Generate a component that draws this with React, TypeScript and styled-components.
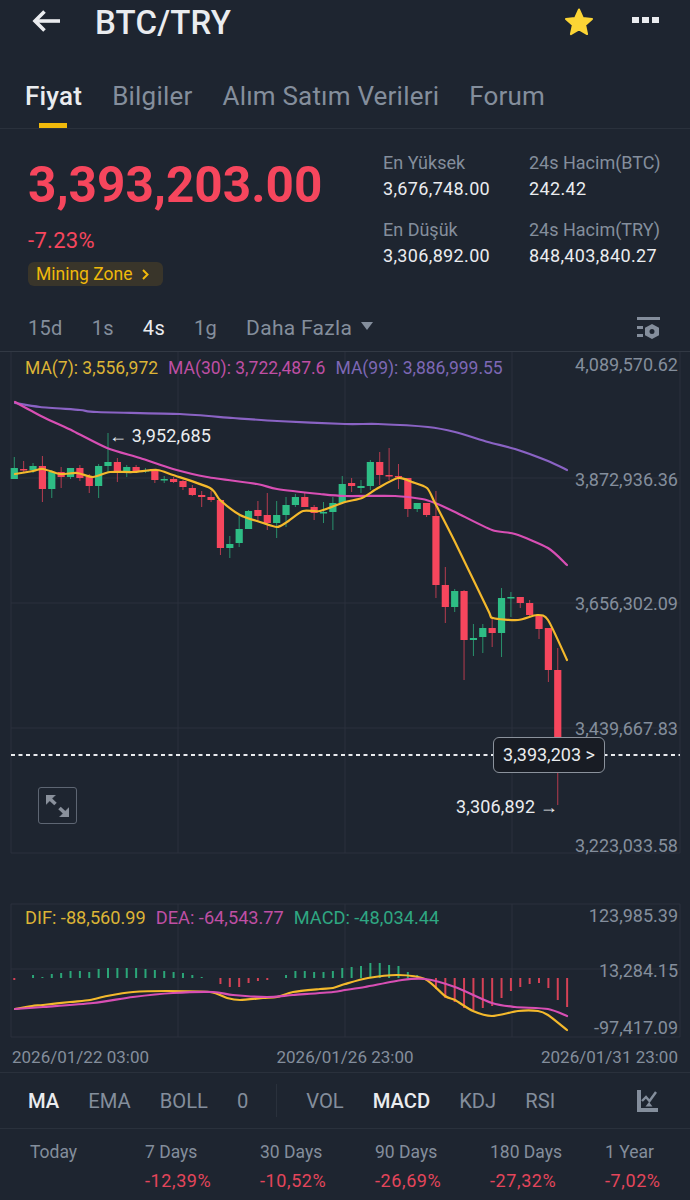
import React from 'react';
import styled, { createGlobalStyle } from 'styled-components';

const GlobalStyle = createGlobalStyle`
  html, body {
    margin: 0;
    padding: 0;
    background: #1e2530;
  }
  * {
    box-sizing: border-box;
  }
`;

const RED = '#f6465d';
const GREEN = '#2ebd85';
const YELLOW = '#f0b90b';
const PINK = '#d84fb4';
const PURPLE = '#8a63c4';
const GRID = '#2a313c';
const MUTED = '#848e9c';

// [top of body, bottom of body, top of wick, bottom of wick, up?]
type Candle = [number, number, number, number, number];

const candles: Candle[] = [
  [468, 479, 457, 479, 1], [469, 470, 461, 472, 0], [466, 470, 463, 473, 1], [466, 489, 456, 502, 0],
  [472, 489, 470, 498, 1], [472, 477, 467, 488, 0], [468, 477, 468, 479, 1], [468, 478, 465, 481, 0],
  [477, 486, 474, 493, 0], [466, 486, 464, 498, 1], [462, 466, 433, 472, 1], [462, 472, 458, 482, 0],
  [467, 472, 465, 477, 1], [467, 471, 465, 472, 0], [470, 471, 468, 473, 1], [471, 480, 470, 483, 0],
  [479, 480, 476, 483, 1], [479, 482, 477, 483, 0], [481, 487, 480, 490, 0], [488, 495, 485, 496, 0],
  [495, 497, 491, 507, 0], [497, 500, 491, 502, 0], [500, 548, 500, 555, 0], [544, 548, 536, 558, 1],
  [529, 543, 515, 547, 1], [511, 529, 510, 529, 1], [510, 516, 501, 522, 0], [515, 523, 493, 530, 0],
  [515, 523, 501, 538, 1], [505, 515, 497, 527, 1], [497, 505, 494, 507, 1], [497, 507, 493, 507, 0],
  [507, 513, 505, 520, 0], [512, 513, 502, 523, 1], [503, 512, 497, 530, 1], [484, 503, 476, 503, 1],
  [483, 486, 478, 492, 0], [486, 488, 480, 493, 1], [462, 486, 460, 490, 1], [462, 475, 452, 485, 0],
  [475, 476, 448, 480, 0], [476, 477, 464, 489, 0], [478, 509, 478, 517, 0], [503, 509, 503, 512, 1],
  [503, 515, 503, 517, 0], [516, 585, 491, 598, 0], [585, 607, 567, 623, 0], [591, 607, 589, 612, 1],
  [591, 640, 590, 680, 0], [638, 640, 624, 656, 1], [628, 637, 624, 653, 1], [628, 633, 618, 647, 0],
  [598, 633, 588, 657, 1], [597, 598, 592, 617, 1], [597, 603, 597, 608, 0], [603, 615, 600, 616, 0],
  [615, 629, 615, 639, 0], [628, 670, 628, 682, 0], [670, 755, 648, 805, 0],
];

// end of each MACD histogram bar, the bars start at the zero line
const histogram = [
  980, 978, 975, 977, 974, 973, 971, 971, 972, 969, 968, 968, 968, 968, 969, 970, 971, 972, 973, 975, 977, 978,
  984, 987, 987, 983, 981, 980, 978, 975, 971, 971, 972, 972, 971, 968, 967, 966, 963, 963, 965, 966, 972, 975, 978,
  989, 998, 1002, 1008, 1010, 1008, 1006, 998, 991, 987, 984, 983, 988, 1000, 1007,
];

const candleX = (i: number) => 14.3 + i * 9.37;

const ma99 = '15,403 40,407 80,410 97,412 180,414 233,418 277,421 345,424 378,424 428,427 455,432 488,442 515,449 548,461 567,470';
const ma30 = '15,402 43,417 73,431 107,448 140,458 173,469 207,477 257,484 277,489 320,494 345,496 395,496 422,499 435,503 455,512 492,530 515,534 548,548 567,565';
const ma7 = '15,474 33,471 43,469 60,474 77,473 93,477 110,472 133,472 157,470 173,475 210,488 220,500 240,515 260,522 277,527 287,522 303,511 320,511 345,502 362,498 378,488 398,478 412,482 427,488 435,503 455,542 488,610 493,618 518,620 537,615 548,620 567,660';
const dif = '15,1009 32,1006 43,1005 70,1002 90,1000 107,996 133,992 167,991 210,992 227,998 240,1000 263,998 277,997 293,992 320,989 333,988 345,984 368,978 398,975 425,979 445,996 455,1000 473,1011 492,1016 518,1011 538,1011 548,1015 567,1030';
const dea = '15,1009 43,1007 93,1003 133,997 173,993 213,992 233,995 267,997 293,995 333,992 345,990 365,987 402,980 425,979 455,987 492,1003 515,1007 548,1009 567,1016';

// catmull-rom through the points so the averages don't look like polylines
const smooth = (points: string) => {
  const p = points.split(' ').map((s) => s.split(',').map(Number));
  let d = `M${p[0][0]} ${p[0][1]}`;
  for (let i = 0; i < p.length - 1; i++) {
    const a = p[Math.max(i - 1, 0)];
    const b = p[i];
    const c = p[i + 1];
    const e = p[Math.min(i + 2, p.length - 1)];
    const c1 = [b[0] + (c[0] - a[0]) / 8, b[1] + (c[1] - a[1]) / 8];
    const c2 = [c[0] - (e[0] - b[0]) / 8, c[1] - (e[1] - b[1]) / 8];
    d += `C${c1[0]} ${c1[1]} ${c2[0]} ${c2[1]} ${c[0]} ${c[1]}`;
  }
  return d;
};

const Page = styled.div`
  width: 690px;
  height: 1200px;
  overflow: hidden;
  background: #1e2530;
  color: #eaecef;
  font-family: Roboto, 'Liberation Sans', sans-serif;
`;

const Header = styled.header`
  display: flex;
  align-items: center;
  height: 44px;
  padding: 0 31px 0 32px;
`;

const BackButton = styled.div`
  display: flex;
  margin-bottom: 3px;
`;

const PairTitle = styled.h1`
  margin: 0 0 0 35px;
  flex: 1;
  font-size: 33px;
  font-weight: 500;
  letter-spacing: 0.2px;
`;

const HeaderDots = styled.div`
  display: flex;
  gap: 3px;
  margin-left: 38px;
  margin-bottom: 5px;
`;

const Dot = styled.span`
  width: 7px;
  height: 6px;
  background: #eaecef;
`;

const Tabs = styled.nav`
  display: flex;
  gap: 30px;
  height: 85px;
  padding: 36px 0 0 25px;
  border-bottom: 1px solid ${GRID};
`;

const Tab = styled.div<{ $active?: boolean }>`
  position: relative;
  height: 48px;
  font-size: 26px;
  line-height: 32px;
  letter-spacing: 0.2px;
  font-weight: ${(p) => (p.$active ? 500 : 400)};
  color: ${(p) => (p.$active ? '#eaecef' : MUTED)};

  &::after {
    content: '';
    display: ${(p) => (p.$active ? 'block' : 'none')};
    position: absolute;
    left: 14px;
    bottom: 0;
    width: 28px;
    height: 5px;
    background: ${YELLOW};
  }
`;

const Summary = styled.section`
  display: flex;
  height: 176px;
`;

const PriceBlock = styled.div`
  width: 383px;
  padding: 27px 0 0 28px;
`;

const BigPrice = styled.div`
  font-size: 49.5px;
  line-height: 58px;
  font-weight: 700;
  color: ${RED};
`;

const Change = styled.div`
  margin-top: 15px;
  font-size: 22px;
  line-height: 24px;
  letter-spacing: 0.3px;
  color: ${RED};
`;

const MiningZone = styled.div`
  display: inline-flex;
  align-items: center;
  gap: 9px;
  height: 24px;
  margin-top: 9px;
  padding: 0 14px 0 8px;
  border-radius: 6px;
  background: #39352a;
  color: ${YELLOW};
  font-size: 17.5px;
`;

const Stats = styled.div`
  display: grid;
  grid-template-columns: 146px 146px;
  grid-auto-rows: 67px;
  padding-top: 24px;
`;

const StatLabel = styled.div`
  font-size: 18px;
  line-height: 20px;
  color: ${MUTED};
`;

const StatValue = styled.div`
  margin-top: 6px;
  font-size: 18px;
  line-height: 20px;
  letter-spacing: 0.35px;
  color: #eaecef;
`;

const Intervals = styled.div`
  display: flex;
  align-items: center;
  gap: 29px;
  height: 47px;
  padding: 0 30px 0 28px;
  border-bottom: 1px solid #323944;
`;

const Interval = styled.div<{ $active?: boolean }>`
  font-size: 20px;
  letter-spacing: 0.3px;
  color: ${(p) => (p.$active ? '#eaecef' : MUTED)};
`;

const More = styled(Interval)`
  display: flex;
  align-items: center;
  gap: 9px;
  flex: 1;
  font-size: 21px;
`;

const Caret = styled.span`
  width: 0;
  height: 0;
  margin-bottom: 4px;
  border-left: 6px solid transparent;
  border-right: 6px solid transparent;
  border-top: 8px solid ${MUTED};
`;

const ChartPanel = styled.div<{ $height: number }>`
  position: relative;
  height: ${(p) => p.$height}px;

  svg.plot {
    display: block;
  }
`;

const Legend = styled.div<{ $top: number; $size: number }>`
  position: absolute;
  left: 25px;
  top: ${(p) => p.$top}px;
  display: flex;
  gap: 10px;
  font-size: ${(p) => p.$size}px;
  line-height: 20px;
  white-space: nowrap;
`;

const LegendItem = styled.span<{ $color: string }>`
  color: ${(p) => p.$color};
`;

const AxisLabel = styled.div<{ $top: number }>`
  position: absolute;
  right: 12px;
  top: ${(p) => p.$top}px;
  font-size: 18px;
  line-height: 20px;
  color: ${MUTED};
`;

const PriceMark = styled.div<{ $top: number; $left: number }>`
  position: absolute;
  left: ${(p) => p.$left}px;
  top: ${(p) => p.$top}px;
  font-size: 18px;
  line-height: 20px;
  letter-spacing: 0.15px;
  color: #eaecef;
  white-space: nowrap;
`;

const LastPrice = styled.div`
  position: absolute;
  left: 493px;
  top: 385px;
  width: 112px;
  height: 36px;
  border: 1px solid #8b929c;
  border-radius: 6px;
  background: #181c24;
  color: #eaecef;
  font-size: 18px;
  line-height: 34px;
  text-align: center;
`;

const ExpandButton = styled.div`
  position: absolute;
  left: 38px;
  top: 435px;
  width: 39px;
  height: 37px;
  display: flex;
  align-items: center;
  justify-content: center;
  border: 1px solid #5e6673;
  border-radius: 3px;
`;

const DateRow = styled.div`
  display: flex;
  justify-content: space-between;
  align-items: center;
  height: 31px;
  padding: 0 12px;
  border-bottom: 1px solid ${GRID};
  font-size: 17px;
  color: ${MUTED};
`;

const Indicators = styled.div`
  display: flex;
  align-items: center;
  height: 56px;
  padding: 0 32px 0 28px;
  border-bottom: 1px solid ${GRID};
`;

const IndicatorGroup = styled.div`
  display: flex;
  align-items: center;
  gap: 29px;
`;

const Indicator = styled.div<{ $active?: boolean }>`
  font-size: 20.2px;
  font-weight: ${(p) => (p.$active ? 500 : 400)};
  color: ${(p) => (p.$active ? '#eaecef' : MUTED)};
`;

const Divider = styled.div`
  width: 1px;
  height: 33px;
  margin: 0 29px 0 28px;
  background: ${GRID};
`;

const IndicatorIcon = styled.div`
  margin-left: auto;
  display: flex;
`;

const Periods = styled.div`
  display: grid;
  grid-template-columns: repeat(6, 115px);
  padding: 13px 0 0 30px;
`;

const PeriodLabel = styled.div`
  font-size: 17.5px;
  line-height: 20px;
  color: ${MUTED};
`;

const PeriodValue = styled.div`
  height: 20px;
  margin-top: 9px;
  font-size: 18px;
  line-height: 20px;
  letter-spacing: 0.6px;
  color: #e4455b;
`;

const VerticalGrid: React.FC<{ y1: number; y2: number }> = ({ y1, y2 }) => (
  <>
    {[11, 178, 345, 512, 680].map((x) => (
      <line key={x} x1={x} x2={x} y1={y1} y2={y2} stroke={GRID} strokeWidth={1} />
    ))}
  </>
);

const Line: React.FC<{ points: string; color: string }> = ({ points, color }) => (
  <path d={smooth(points)} fill="none" stroke={color} strokeWidth={2.2} strokeLinejoin="round" strokeLinecap="round" />
);

const MainPlot: React.FC = () => (
  <svg className="plot" width={690} height={530} viewBox="0 352 690 530">
    <VerticalGrid y1={352} y2={853} />
    {[478, 603, 728, 853].map((y) => (
      <line key={y} x1={11} x2={680} y1={y} y2={y} stroke={GRID} strokeWidth={1} />
    ))}
    {candles.map(([top, bottom, high, low, up], i) => {
      const x = candleX(i);
      const color = up ? GREEN : RED;
      return (
        <g key={i}>
          <line x1={x} x2={x} y1={high} y2={low} stroke={color} strokeOpacity={0.7} strokeWidth={1} />
          <rect x={x - 3.6} y={top} width={7.2} height={Math.max(bottom - top, 1.5)} fill={color} />
        </g>
      );
    })}
    <Line points={ma99} color={PURPLE} />
    <Line points={ma30} color={PINK} />
    <Line points={ma7} color="#f4b92c" />
    <line x1={11} x2={680} y1={755} y2={755} stroke="#eaecef" strokeWidth={2} strokeDasharray="4 3.5" />
  </svg>
);

const MacdPlot: React.FC = () => (
  <svg className="plot" width={690} height={160} viewBox="0 882 690 160">
    <VerticalGrid y1={904} y2={1037} />
    {[904, 969, 1037].map((y) => (
      <line key={y} x1={11} x2={680} y1={y} y2={y} stroke={GRID} strokeWidth={1} />
    ))}
    {histogram.map((y, i) => {
      const x = candleX(i);
      const down = y > 978;
      return (
        <line
          key={i}
          x1={x}
          x2={x}
          y1={down ? 978 : y}
          y2={down ? y : 978}
          stroke={down ? RED : GREEN}
          strokeWidth={2}
          strokeOpacity={0.85}
        />
      );
    })}
    <Line points={dif} color="#f4b92c" />
    <Line points={dea} color={PINK} />
  </svg>
);

const StarIcon = () => (
  <svg width={30} height={29} viewBox="0 0 30 29">
    <path
      d="M15 1.5l3.8 8.400 9.200 1-6.800 6.200 1.900 9-8.100-4.600-8.100 4.600 1.900-9L2 10.900l9.200-1z"
      fill="#fcd535"
      stroke="#fcd535"
      strokeWidth={2}
      strokeLinejoin="round"
    />
  </svg>
);

const BackIcon = () => (
  <svg width={28} height={22} viewBox="0 0 28 22" fill="none" stroke="#eaecef" strokeWidth={3.6}>
    <path d="M28 11H3" />
    <path d="M12.500 1.500L3 11l9.500 9.500" />
  </svg>
);

const ChartSettingsIcon = () => (
  <svg width={23} height={22} viewBox="0 0 23 22" fill="#848e9c">
    <rect x={0} y={0} width={23} height={3} />
    <rect x={0} y={9} width={6} height={3} />
    <rect x={0} y={17} width={6} height={3} />
    <path fillRule="evenodd" d="M15 7l7 3.800v7.400L15 22l-7-3.800v-7.400zM15 12a2.500 2.500 0 100 5 2.500 2.500 0 000-5z" />
  </svg>
);

const ExpandIcon = () => (
  <svg width={23} height={22} viewBox="0 0 23 22" fill="#8a919c" stroke="#8a919c">
    <path d="M0 0h9.500L0 9.500z" strokeWidth={0.5} />
    <path d="M3 3l6.500 6" strokeWidth={3.6} />
    <path d="M23 22h-9.500L23 12.500z" strokeWidth={0.5} />
    <path d="M20 19l-6.500-6" strokeWidth={3.6} />
  </svg>
);

const IndicatorChartIcon = () => (
  <svg width={21} height={22} viewBox="0 0 21 22" fill="#848e9c">
    <rect x={0} y={0} width={4} height={22} />
    <rect x={0} y={18} width={21} height={4} />
    <path d="M5 11l4-4 3.500 4L19 2" fill="none" stroke="#848e9c" strokeWidth={2.4} />
    <path d="M12 12l3.500 4.500h-7z" />
  </svg>
);

const App: React.FC = () => (
  <Page>
    <GlobalStyle />
    <Header>
      <BackButton>
        <BackIcon />
      </BackButton>
      <PairTitle>BTC/TRY</PairTitle>
      <StarIcon />
      <HeaderDots>
        <Dot />
        <Dot />
        <Dot />
      </HeaderDots>
    </Header>

    <Tabs>
      <Tab $active>Fiyat</Tab>
      <Tab>Bilgiler</Tab>
      <Tab>Alım Satım Verileri</Tab>
      <Tab>Forum</Tab>
    </Tabs>

    <Summary>
      <PriceBlock>
        <BigPrice>3,393,203.00</BigPrice>
        <Change>-7.23%</Change>
        <MiningZone>
          Mining Zone
          <svg width={7} height={11} viewBox="0 0 7 11" fill="none" stroke={YELLOW} strokeWidth={2}>
            <path d="M1 1l4.500 4.500L1 10" />
          </svg>
        </MiningZone>
      </PriceBlock>
      <Stats>
        <div>
          <StatLabel>En Yüksek</StatLabel>
          <StatValue>3,676,748.00</StatValue>
        </div>
        <div>
          <StatLabel>24s Hacim(BTC)</StatLabel>
          <StatValue>242.42</StatValue>
        </div>
        <div>
          <StatLabel>En Düşük</StatLabel>
          <StatValue>3,306,892.00</StatValue>
        </div>
        <div>
          <StatLabel>24s Hacim(TRY)</StatLabel>
          <StatValue>848,403,840.27</StatValue>
        </div>
      </Stats>
    </Summary>

    <Intervals>
      <Interval>15d</Interval>
      <Interval>1s</Interval>
      <Interval $active>4s</Interval>
      <Interval>1g</Interval>
      <More>
        Daha Fazla
        <Caret />
      </More>
      <ChartSettingsIcon />
    </Intervals>

    <ChartPanel $height={530}>
      <MainPlot />
      <Legend $top={6} $size={17.5}>
        <LegendItem $color="#dcb436">MA(7): 3,556,972</LegendItem>
        <LegendItem $color="#bf4fa4">MA(30): 3,722,487.6</LegendItem>
        <LegendItem $color="#7d68b5">MA(99): 3,886,999.55</LegendItem>
      </Legend>
      <AxisLabel $top={3}>4,089,570.62</AxisLabel>
      <AxisLabel $top={118}>3,872,936.36</AxisLabel>
      <AxisLabel $top={242}>3,656,302.09</AxisLabel>
      <AxisLabel $top={367}>3,439,667.83</AxisLabel>
      <AxisLabel $top={484}>3,223,033.58</AxisLabel>
      <PriceMark $left={109} $top={74}>← 3,952,685</PriceMark>
      <PriceMark $left={456} $top={445}>3,306,892 →</PriceMark>
      <LastPrice>3,393,203 &gt;</LastPrice>
      <ExpandButton>
        <ExpandIcon />
      </ExpandButton>
    </ChartPanel>

    <ChartPanel $height={160}>
      <MacdPlot />
      <Legend $top={26} $size={18.2}>
        <LegendItem $color="#dcb436">DIF: -88,560.99</LegendItem>
        <LegendItem $color="#bf4fa4">DEA: -64,543.77</LegendItem>
        <LegendItem $color="#2fa782">MACD: -48,034.44</LegendItem>
      </Legend>
      <AxisLabel $top={24}>123,985.39</AxisLabel>
      <AxisLabel $top={79}>13,284.15</AxisLabel>
      <AxisLabel $top={136}>-97,417.09</AxisLabel>
    </ChartPanel>

    <DateRow>
      <span>2026/01/22 03:00</span>
      <span>2026/01/26 23:00</span>
      <span>2026/01/31 23:00</span>
    </DateRow>

    <Indicators>
      <IndicatorGroup>
        <Indicator $active>MA</Indicator>
        <Indicator>EMA</Indicator>
        <Indicator>BOLL</Indicator>
        <Indicator>0</Indicator>
      </IndicatorGroup>
      <Divider />
      <IndicatorGroup>
        <Indicator>VOL</Indicator>
        <Indicator $active>MACD</Indicator>
        <Indicator>KDJ</Indicator>
        <Indicator>RSI</Indicator>
      </IndicatorGroup>
      <IndicatorIcon>
        <IndicatorChartIcon />
      </IndicatorIcon>
    </Indicators>

    <Periods>
      {[
        ['Today', ''],
        ['7 Days', '-12,39%'],
        ['30 Days', '-10,52%'],
        ['90 Days', '-26,69%'],
        ['180 Days', '-27,32%'],
        ['1 Year', '-7,02%'],
      ].map(([label, value]) => (
        <div key={label}>
          <PeriodLabel>{label}</PeriodLabel>
          <PeriodValue>{value}</PeriodValue>
        </div>
      ))}
    </Periods>
  </Page>
);

export default App;
